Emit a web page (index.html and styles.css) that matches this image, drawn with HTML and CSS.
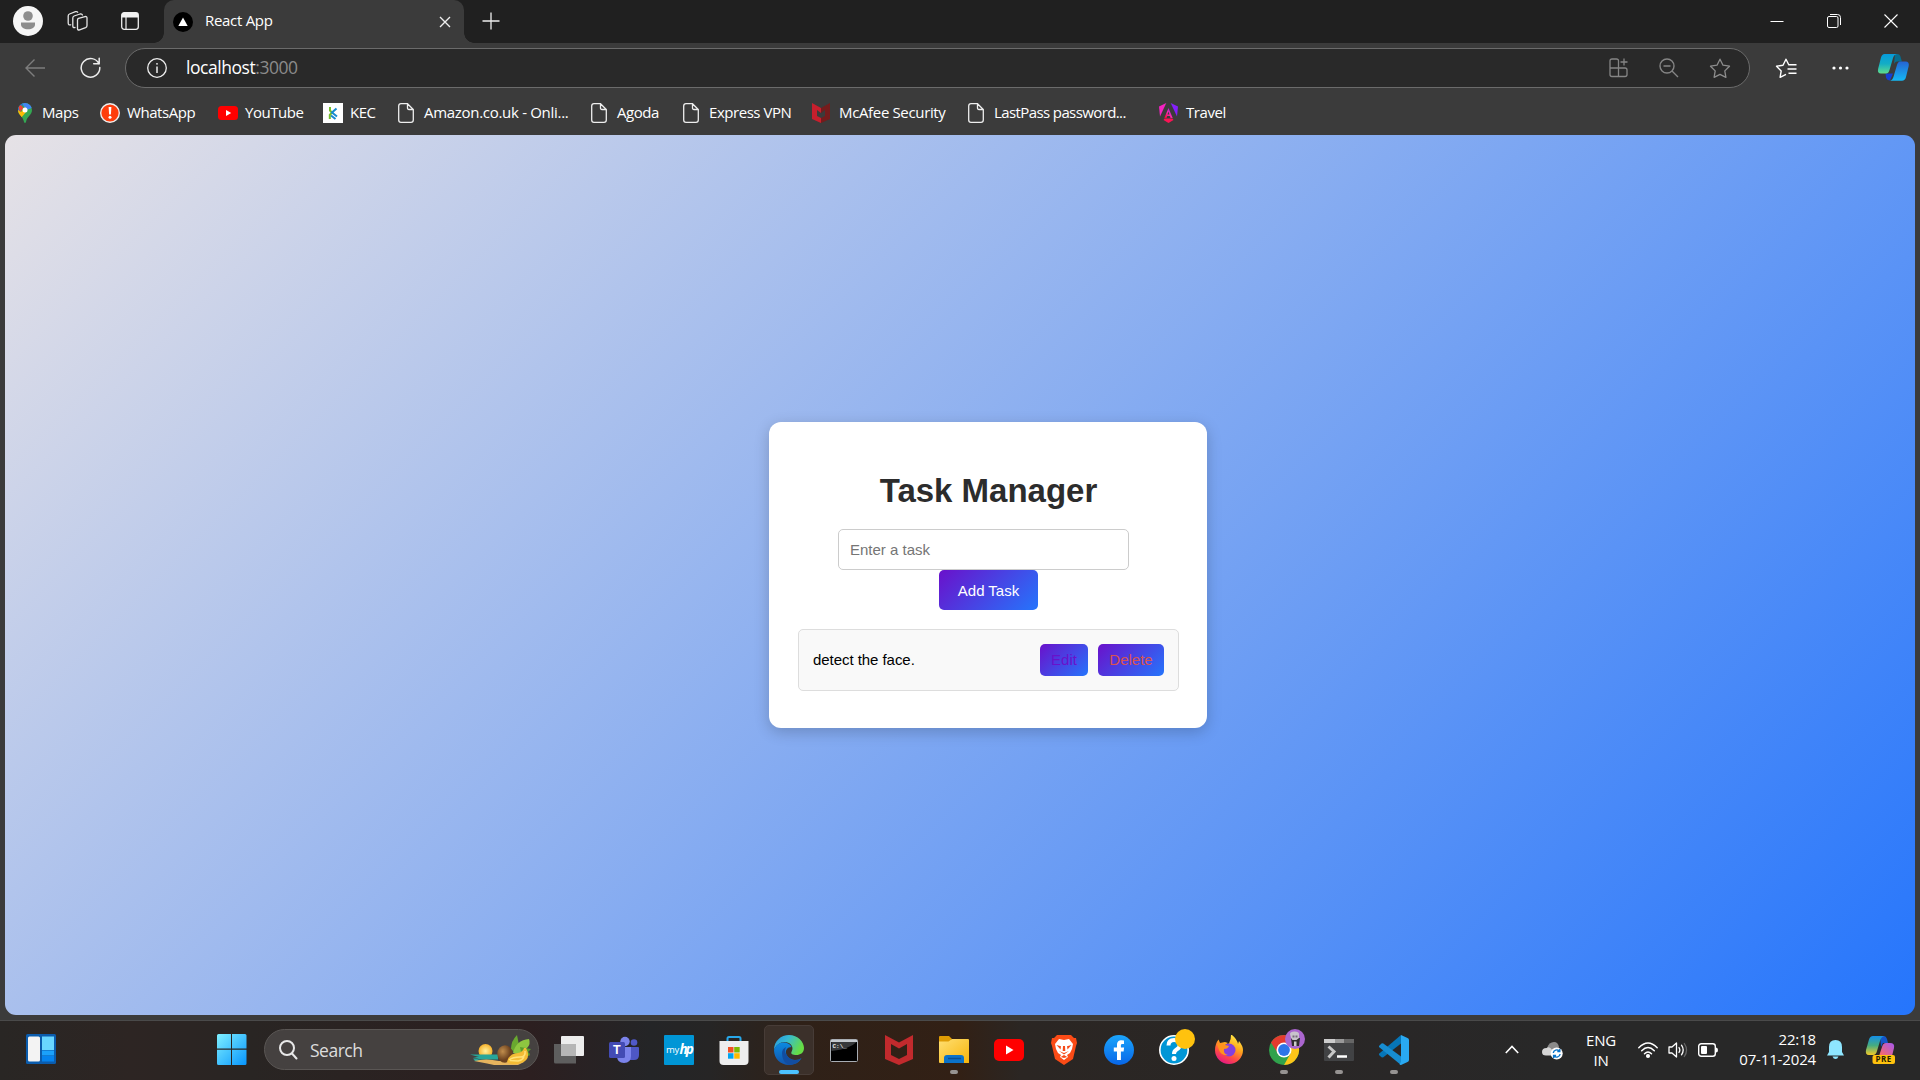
FILE: index.html
```
<!DOCTYPE html>
<html lang="en">
<head>
<meta charset="utf-8">
<title>React App</title>
<link rel="stylesheet" href="styles.css">
</head>
<body>
<div class="desktop">
  <header class="tabstrip">
    <div class="profile"><svg width="30" height="30" viewBox="0 0 30 30"><circle cx="15" cy="15" r="15" fill="#f6f6f6"/><circle cx="15" cy="10" r="4.800" fill="#8d8d8d"/><path d="M8 16.500h14v1.800c0 3.200-3 5-7 5s-7-1.800-7-5z" fill="#8d8d8d"/></svg></div>
    <div class="workspaces"><svg width="22" height="22" viewBox="0 0 22 22" fill="none" stroke="#e4e4e4" stroke-width="1.300" stroke-linejoin="round" stroke-linecap="round"><path d="M11.500 8.300 18 6.600q2-.5 2 1.400v7.500q0 1.500-1.400 2.100l-6 2.200q-2.100.7-2.100-1.300V10q0-1.300 1-1.700z"/><path d="M8 17.500q-2.200.5-2.200-1.500V8q0-1.500 1.300-2l6-2q1.800-.5 2.300 1"/><path d="M3.700 14.800Q1.200 15.500 1.200 13V6q0-1.500 1.300-2l6-2.300q1.600-.5 2.200.6"/></svg></div>
    <div class="vertical-tabs"><svg width="18" height="18" viewBox="0 0 18 18"><rect x=".7" y=".7" width="16.600" height="16.600" rx="2.500" fill="none" stroke="#eee" stroke-width="1.300"/><path d="M.7 5.500V3Q.7.700 3 .7h12q2.300 0 2.300 2.300v2.500z" fill="#f2f2f2"/><path d="M5 5v12" stroke="#eee" stroke-width="1.200"/></svg></div>
    <div class="tab">
      <svg width="20" height="20" viewBox="0 0 20 20"><circle cx="10" cy="10" r="10"/><path d="M10 5.500 14.700 14H5.300z" fill="#fff"/></svg>
      <span class="tab-title">React App</span>
      <svg class="tab-close" width="12" height="12" viewBox="0 0 12 12" stroke="#eee" stroke-width="1.400"><path d="m1 1 10 10M11 1 1 11"/></svg>
    </div>
    <div class="new-tab"><svg width="18" height="18" viewBox="0 0 18 18" stroke="#eee" stroke-width="1.300"><path d="M9 .5v17M.5 9h17"/></svg></div>
    <div class="window-controls">
      <svg width="14" height="14" viewBox="0 0 14 14" stroke="#fff"><path d="M.5 7.500h13"/></svg>
      <svg width="14" height="14" viewBox="0 0 14 14" fill="none" stroke="#fff"><rect x=".5" y="2.500" width="10.500" height="11" rx="1.500"/><path d="M3 .5h7.500q3 0 3 3V11"/></svg>
      <svg width="14" height="14" viewBox="0 0 14 14" stroke="#fff" stroke-width="1.100"><path d="m.5.5 13 13M13.500.5l-13 13"/></svg>
    </div>
  </header>

  <nav class="toolbar">
    <svg class="back" width="20" height="18" viewBox="0 0 20 18" fill="none" stroke="#7d7d7d" stroke-width="1.400"><path d="M20 9H1M9.500.5 1 9l8.500 8.500"/></svg>
    <svg class="reload" width="21" height="21" viewBox="0 0 21 21" fill="none" stroke="#ededed" stroke-width="1.500" stroke-linecap="round" stroke-linejoin="round"><path d="M19 7a9.300 9.300 0 1 0 .8 3.500M19.200 1.200v5.600h-5.500"/></svg>
    <div class="address">
      <svg width="20" height="20" viewBox="0 0 20 20" fill="none" stroke="#eee" stroke-width="1.300"><circle cx="10" cy="10" r="9.300"/><path d="M10 8.500V15" stroke-width="1.500"/><circle cx="10" cy="5.800" r=".9" fill="#eee" stroke="none"/></svg>
      <span class="url">localhost<span class="port">:3000</span></span>
      <div class="address-actions">
        <svg width="20" height="20" viewBox="0 0 20 20" fill="none" stroke="#858585" stroke-width="1.300"><path d="M9.500 10V3q0-2-2-2H3Q1 1 1 3v13.500q0 2 2 2h13q2 0 2-2V12q0-2-2-2H1M9.500 10v8.500M15 .5v7M11.500 4h7"/></svg>
        <svg width="20" height="20" viewBox="0 0 20 20" fill="none" stroke="#858585" stroke-width="1.400"><circle cx="8" cy="8" r="7"/><path d="M4.500 8h7M13 13l6 6"/></svg>
        <svg width="22" height="20" viewBox="0 0 22 20" fill="none" stroke="#8d8d8d" stroke-width="1.300" stroke-linejoin="round"><path d="m11 1.200 3 6 6.500 1-4.700 4.700 1.100 6.400-5.900-3-5.900 3 1.100-6.400L1.500 8.200l6.500-1z"/></svg>
      </div>
    </div>
    <svg class="favorites" width="22" height="20" viewBox="0 0 22 20" fill="none" stroke="#fff" stroke-width="1.400" stroke-linejoin="round"><path d="M14 7.200 11 1.200 8 7.200l-6.500 1 4.700 4.700-1.100 6.400 5.900-3M13.500 6.800H21.500M12.500 11H21.500M13.500 15.300H21.500"/></svg>
    <svg class="menu" width="18" height="4" viewBox="0 0 18 4" fill="#fff"><circle cx="2" cy="2" r="1.600"/><circle cx="8.500" cy="2" r="1.600"/><circle cx="15" cy="2" r="1.600"/></svg>
    <svg class="copilot" width="31" height="27" viewBox="0 0 31 27">
      <defs>
        <linearGradient id="cpA" x1="0" y1="0" x2="0" y2="1"><stop offset="0" stop-color="#069bdc"/><stop offset=".5" stop-color="#13adc5"/><stop offset="1" stop-color="#5fdc8c"/></linearGradient>
        <linearGradient id="cpB" x1="0" y1="0" x2="0" y2="1"><stop offset="0" stop-color="#2563d3"/><stop offset="1" stop-color="#14b9f4"/></linearGradient>
      </defs>
      <path d="M17 0h2.500q2 0 2.800 2l1.600 5.500h-5Q17 7.500 16 10z" fill="#086d8f"/>
      <path d="M7.500 19.500H15l-3 7q-3 0-4-3z" fill="#153fd2"/>
      <path d="M6.500 0H19q-3 .5-4 4l-3.500 12q-1 3.500-3.500 3.500H3q-4 0-2.800-5L3 3.500Q4 0 6.500 0z" fill="url(#cpA)"/>
      <path d="M22 7.500h5.500q4 0 3.200 4.500L28 23q-1 3.800-4 3.800H12q2.500-.5 3.500-4L19 11q1-3.500 3-3.500z" fill="url(#cpB)"/>
    </svg>
  </nav>

  <nav class="bookmarks">
    <div class="bookmark maps"><svg width="14" height="20" viewBox="0 0 14 20"><clipPath id="pin"><path d="M7 0a7 7 0 0 1 7 7c0 5-5 6-6 12q-1 2-2 0C5 13 0 12 0 7a7 7 0 0 1 7-7z"/></clipPath><g clip-path="url(#pin)"><path d="M0 0h14v20H0z" fill="#34a853"/><path d="M4 0h10v5L8 7z" fill="#4285f4"/><path d="M0 6l3 3 5-5v5l-5 6-3-2z" fill="#fbbc04"/><path d="M0 0h5l-1 4-2 4-2-1z" fill="#1a73e8"/><path d="M0 3.500 3 2l2.500 3L2 9z" fill="#ea4335"/></g><circle cx="7" cy="7" r="2.500" fill="#fff"/></svg><span>Maps</span></div>
    <div class="bookmark whatsapp"><svg width="20" height="20" viewBox="0 0 20 20"><circle cx="10" cy="10" r="9.300" fill="#ff3d0c" stroke="#eee" stroke-width="1.400"/><path d="M8.600 4h2.800l-.5 7.500H9.100z" fill="#fff"/><circle cx="10" cy="14.300" r="1.500" fill="#fff"/></svg><span>WhatsApp</span></div>
    <div class="bookmark youtube"><svg width="20" height="14" viewBox="0 0 20 14"><rect width="20" height="14" rx="3.500" fill="#f00"/><path d="m8 4 5.200 3L8 10z" fill="#fff"/></svg><span>YouTube</span></div>
    <div class="bookmark kec"><svg width="20" height="20" viewBox="0 0 20 20" fill="none" stroke-width="2"><path d="M0 0h20v20H0z" fill="#fff"/><path d="M7 4v3.500l2 2L6.800 12v4" stroke="#75bd2b"/><path d="m13.500 5.500-4.500 4 5 4M8 12.500l4.500 3.500" stroke="#168ad0"/></svg><span>KEC</span></div>
    <div class="bookmark amazon"><svg width="16" height="20" viewBox="0 0 16 20" fill="none" stroke="#eee" stroke-width="1.300"><path d="M9.500.7H3Q.7.700.7 3v14q0 2.300 2.300 2.300h10q2.300 0 2.300-2.300V6.500zM9.500.7V5q0 1.500 1.500 1.500h4.300"/></svg><span>Amazon.co.uk - Onli...</span></div>
    <div class="bookmark agoda"><svg width="16" height="20" viewBox="0 0 16 20" fill="none" stroke="#eee" stroke-width="1.300"><path d="M9.500.7H3Q.7.700.7 3v14q0 2.300 2.300 2.300h10q2.300 0 2.300-2.300V6.500zM9.500.7V5q0 1.500 1.500 1.500h4.300"/></svg><span>Agoda</span></div>
    <div class="bookmark express"><svg width="16" height="20" viewBox="0 0 16 20" fill="none" stroke="#eee" stroke-width="1.300"><path d="M9.500.7H3Q.7.700.7 3v14q0 2.300 2.300 2.300h10q2.300 0 2.300-2.300V6.500zM9.500.7V5q0 1.500 1.500 1.500h4.300"/></svg><span>Express VPN</span></div>
    <div class="bookmark mcafee"><svg width="18" height="20" viewBox="0 0 18 20" fill="none"><path d="M0 0l9 5v5L5 7v6l4 2v5l-9-4z" fill="#c71f2d"/><path d="m18 0-9 5v5l4-3v6l-4 2v5l9-4z" fill="#741c1c"/></svg><span>McAfee Security</span></div>
    <div class="bookmark lastpass"><svg width="16" height="20" viewBox="0 0 16 20" fill="none" stroke="#eee" stroke-width="1.300"><path d="M9.500.7H3Q.7.700.7 3v14q0 2.300 2.300 2.300h10q2.300 0 2.300-2.300V6.500zM9.500.7V5q0 1.500 1.500 1.500h4.300"/></svg><span>LastPass password...</span></div>
    <div class="bookmark travel"><svg width="19" height="20" viewBox="0 0 19 20"><defs><linearGradient id="ng" x1="0" y1="1" x2="1" y2="0"><stop offset="0" stop-color="#f02"/><stop offset=".5" stop-color="#f22bb3"/><stop offset="1" stop-color="#7b1cff"/></linearGradient></defs><path d="M0 3.500 7.300 0 1 13.500z" fill="#f423c2"/><path d="M19 3.500 11.700 0 18 13.500z" fill="#8420fb"/><path d="m9.500 5 4.200 10h-2.200l-.7-2H8.200l-.7 2H5.300zm0 3.500L8.500 11.500h2z" fill="url(#ng)" fill-rule="evenodd"/><path d="M5.500 15.500h8l1 1.500-5 3-5-3z" fill="#fa1455"/></svg><span>Travel</span></div>
  </nav>

  <main class="page">
    <section class="card">
      <h1>Task Manager</h1>
      <input class="task-input" type="text" placeholder="Enter a task">
      <button class="add">Add Task</button>
      <div class="task">
        <span class="task-name">detect the face.</span>
        <button class="small edit">Edit</button>
        <button class="small delete">Delete</button>
      </div>
    </section>
  </main>

  <footer class="taskbar">
    <div class="widgets"><svg width="30" height="30" viewBox="0 0 30 30"><rect width="30" height="30" rx="1.500" fill="#0b5cad"/><rect x="2" y="2.500" width="12" height="25" rx="1.500" fill="#f3f3f3"/><path d="M16 2.500h12V16H16z" fill="#69d6ff"/><path d="M16 16.500h12v5H16z" fill="#1ba1fb"/><path d="M16 22h12v5.500H16z" fill="#0583ee"/></svg></div>
    <div class="start"><svg width="30" height="31" viewBox="0 0 30 31"><defs><linearGradient id="win" x1="0" y1="0" x2="1" y2="1"><stop offset="0" stop-color="#7ff0ff"/><stop offset="1" stop-color="#0795fd"/></linearGradient></defs><path d="M1.500 0H14v14.500H0v-13Q0 0 1.500 0zM15 0h13q1.500 0 1.500 1.500v13H15zM0 15.700h14V31H1.500Q0 31 0 29.500zM15 15.700h14.500v13.800q0 1.500-1.500 1.500H15z" fill="url(#win)"/></svg></div>
    <div class="search">
      <svg width="19" height="20" viewBox="0 0 19 20" fill="none" stroke="#e8e8e8" stroke-width="2" stroke-linecap="round"><circle cx="8" cy="8" r="7"/><path d="m13 13.500 4.500 5"/></svg>
      <span>Search</span>
      <svg class="fruit" width="61" height="32" viewBox="0 0 61 32">
        <defs><radialGradient id="sun"><stop offset="0" stop-color="#fff3a0"/><stop offset="1" stop-color="#f6b12c"/></radialGradient><radialGradient id="coco" cx=".35" cy=".35"><stop offset="0" stop-color="#c08d4c"/><stop offset="1" stop-color="#6d421f"/></radialGradient></defs>
        <circle cx="15.500" cy="17" r="7" fill="url(#sun)"/>
        <path d="M0 20.500h28v5H7l5 1.500H5l-2-2.500h6L3 23h6z" fill="#27a69a"/>
        <path d="M4 27q12-3 25 0l25 1-6 3H24l-7-1.500z" fill="#e6b45e"/>
        <path d="M47 1q1 5 2 10l-3 9-5-5q0-8 6-14z" fill="#69a82f"/>
        <path d="M59 5q2 5-2 9l-9 6-5-1q3-13 16-14z" fill="#8ec640"/><path d="m50 13 11 2-3 3q3 2 1 4l-8-4z" fill="#5a9d2c"/>
        <ellipse cx="35" cy="20" rx="7.700" ry="8.700" fill="url(#coco)"/>
        <path d="M54 14h2q6 11-5 15-9 3-14-1l1-3q3-6 10-6 5-1 6-5z" fill="#f4bc35"/><path d="M55 17q1 6-5 6-7 0-11 3M54 21q0 5-6 6l-8-.5" fill="none" stroke="#ffe277" stroke-width="1.500"/>
      </svg>
    </div>
    <div class="apps">
      <div class="app"><svg width="30" height="30" viewBox="0 0 30 30"><path d="M0 9h22v19.500H1.500Q0 28.500 0 27z" fill="#5e5e5e"/><rect x="7" y="1" width="23" height="20" rx="1" fill="#ededed"/><path d="M7 9h15v12H7z" fill="#b6b6b6"/></svg></div>
      <div class="app"><svg width="30" height="30" viewBox="0 0 30 30"><circle cx="25" cy="7.500" r="3.300" fill="#5059c9"/><path d="M20 12h9q1 0 1 1v7q0 5-5 5h-5z" fill="#4e57c5"/><circle cx="16" cy="6.500" r="4.700" fill="#7b83eb"/><path d="M8 12h14v9q0 7-7 7t-7-7z" fill="#7b83eb"/><rect y="7" width="16" height="16" rx="1.500" fill="#434bb4"/><text class="glyph-teams" x="4" y="19.300">T</text></svg></div>
      <div class="app"><svg width="30" height="30" viewBox="0 0 30 30"><rect width="30" height="30" rx="1" fill="#0096d6"/><text class="glyph-my" x="2" y="17.500">my</text><text class="glyph-hp" x="15.500" y="18.500">hp</text></svg></div>
      <div class="app"><svg width="30" height="30" viewBox="0 0 30 30"><path d="M8.500 7V3.500Q8.500 2 10 2h10q1.500 0 1.500 1.500V7" fill="none" stroke="#28a8ea" stroke-width="2"/><path d="M.5 6h29v20q0 4-4 4h-21q-4 0-4-4z" fill="#eee"/><path d="M9 12h5.500v5.500H9z" fill="#f25022"/><path d="M15.200 12h5.500v5.500h-5.500z" fill="#7fba00"/><path d="M9 18.200h5.500v5.500H9z" fill="#00a4ef"/><path d="M15.200 18.200h5.500v5.500h-5.500z" fill="#ffb900"/></svg></div>
      <div class="app active"><svg width="30" height="30" viewBox="0 0 30 30"><defs><linearGradient id="eg" x1="0" y1="0" x2="1" y2=".4"><stop offset="0" stop-color="#2494df"/><stop offset=".45" stop-color="#36b9d4"/><stop offset="1" stop-color="#66dd45"/></linearGradient><linearGradient id="eb" x1="0" y1="0" x2="0" y2="1"><stop offset="0" stop-color="#0b8ae2"/><stop offset="1" stop-color="#1254ab"/></linearGradient></defs><path d="M0 15C0 6 7 0 15 0c9 0 15 7 15 13 0 5-4 7-7.500 7-4 0-6-1.200-5-3C21 11 15 7 11 7 6 7 2 10 0 15z" fill="url(#eg)"/><path d="M0 15c2-5 5-7.500 10-7.500 4 0 7 2.500 7.500 4.500-4 0-6 3-5.500 6 .6 4 5 7 9 7 3 0 5-1 6.500-2C25 28 20 30 15 30 6.500 30 0 23.500 0 15z" fill="url(#eb)"/><path d="M8 18q0-4 4-6-2 4 0 7 4 7 11 6 2-.2 4-2-4 7-12 7-7-3-7-12z" fill="#124da0"/></svg></div>
      <div class="app"><svg width="28" height="23" viewBox="0 0 28 23"><rect x=".5" y=".5" width="27" height="22" rx="1" fill="#000" stroke="#a8adb3"/><path d="M1 1h26v2H1z" fill="#c4c9ce"/><path d="M1.500 3h25Q20 10 1.500 12z" fill="#37393b"/><text class="glyph-cmd" x="2.500" y="9">C:\_</text></svg></div>
      <div class="app"><svg width="28" height="30" viewBox="0 0 28 30"><path d="m0 0 14 7.500L28 0v24l-14 6-14-6zm6 9v11l8 4 8-4V9l-8 4.500z" fill="#c22a2d" fill-rule="evenodd"/></svg></div>
      <div class="app running"><svg width="30" height="28" viewBox="0 0 30 28"><defs><linearGradient id="fold" x1="0" y1="0" x2="1" y2="1"><stop offset="0" stop-color="#ffdf72"/><stop offset="1" stop-color="#f7b50b"/></linearGradient></defs><path d="M1 0h9l3 3-3 5H0V1q0-1 1-1z" fill="#df9c04"/><path d="M0 5.500h9.500L13 3h16q1 0 1 1v23H1q-1 0-1-1z" fill="url(#fold)"/><path d="M5 27v-5q0-3 3-3h14q3 0 3 3v5z" fill="#0b72c9"/><path d="M9 22.500h13" stroke="#084f94" stroke-width="1.500"/></svg></div>
      <div class="app"><svg width="30" height="22" viewBox="0 0 30 22"><rect width="30" height="22" rx="5" fill="#f00"/><path d="m12 6.500 7.500 4.500-7.500 4.500z" fill="#fff"/></svg></div>
      <div class="app"><svg width="26" height="30" viewBox="0 0 26 30"><path d="M6 0h14l3 3h2l1 5-1 3-3 13-9 6-9-6L1 11 0 8l1-5h2z" fill="#fb4b16"/><path d="m13 5 5-1 4 5-1 5-2 4-3 2 1 2-4 3-4-3 1-2-3-2-2-4-1-5 4-5z" fill="#fff"/><path d="m5.500 10 4.500 1.200-.5 3.200zM20.500 10 16 11.200l.5 3.200zM12 11h2l.3 5h-2.600zM8 16l5 2 5-2-5 3.500zM9.700 22l3.300-2 3.300 2-3.300 1z" fill="#f74a18"/></svg></div>
      <div class="app"><svg width="30" height="30" viewBox="0 0 30 30"><defs><linearGradient id="fb" x1="0" y1="0" x2="0" y2="1"><stop offset="0" stop-color="#1ba5fb"/><stop offset="1" stop-color="#0866e8"/></linearGradient></defs><circle cx="15" cy="15" r="15" fill="url(#fb)"/><path d="M13 25v-8.500H9.800v-4H13V10c0-3.400 2-4.800 4.500-4.800l2.500.2V9h-1.500c-1.300 0-1.600.7-1.600 1.600v1.900h3.200l-.5 4h-2.700V25z" fill="#fff"/></svg></div>
      <div class="app"><svg class="spill" width="36" height="36" viewBox="0 0 36 36"><circle cx="15" cy="21" r="14.200" fill="#0096d6" stroke="#fff" stroke-width="1.600"/><path d="M9.500 16.500Q9.500 11 15 11q5.800 0 5.800 4.700 0 3-3.200 4.800-2.600 1.500-2.600 4.500" fill="none" stroke="#fff" stroke-width="4"/><circle cx="15" cy="29.500" r="2.500" fill="#fff"/><circle cx="26" cy="10" r="10" fill="#ffc20e"/></svg></div>
      <div class="app"><svg width="30" height="30" viewBox="0 0 30 30"><defs><linearGradient id="ff" x1=".8" y1="0" x2=".3" y2="1"><stop offset="0" stop-color="#fff04a"/><stop offset=".4" stop-color="#ffa71c"/><stop offset=".7" stop-color="#ff4d43"/><stop offset="1" stop-color="#e31587"/></linearGradient></defs><path d="M18 0q5 4 6 9l1-3q4 5 4 9a14 14 0 1 1-28 0Q1 9 4.500 4.500L6 8l5-1 3 1-4 3q7-1 7-11z" fill="url(#ff)"/><circle cx="15" cy="15" r="6.500" fill="#8340df"/><path d="M3 9q5-2 8 1l4 1q-1 3-5 3-1 5 4 6-7 1-9-5z" fill="#ff921e"/></svg></div>
      <div class="app running"><svg class="spill" width="36" height="36" viewBox="0 0 36 36"><circle cx="15" cy="21" r="15" fill="#30a24c"/><path d="M2 13.500A15 15 0 0 1 28 13.500L15 14l-6 10.500z" fill="#e33b2e"/><path d="M28 13.500A15 15 0 0 1 15 36l6.500-11.500L15 14z" fill="#fcc519"/><circle cx="15" cy="21" r="7.500" fill="#fff"/><circle cx="15" cy="21" r="5.900" fill="#2d75e8"/><circle cx="26" cy="10" r="10" fill="#ab66cf"/><path d="M22 9h9l-1 8h-7z" fill="#302d31"/><path d="M21 5q0-2.500 4.500-2.500T30 5v4l-2.500 2h-4L22 9z" fill="#c9c3cc"/><path d="M23.500 6.500h2v2h-2zM26.500 6.500h2v2h-2z" fill="#776b7b"/><path d="M25 12.500h2.500v4.500H25z" fill="#ccc"/></svg></div>
      <div class="app running"><svg width="30" height="22" viewBox="0 0 30 22"><rect width="30" height="22" rx="1" fill="#414244"/><path d="M0 0h11v4H0z" fill="#ccc"/><path d="M11 0h9v4h-9z" fill="#999"/><path d="M20 0h10v4H20z" fill="#666"/><path d="m4.500 7.500 5.500 5-5.500 6" fill="none" stroke="#c7c7c7" stroke-width="3"/><path d="M13 17.500h10" stroke="#fff" stroke-width="2.500"/></svg></div>
      <div class="app running"><svg width="30" height="30" viewBox="0 0 30 30"><path d="M22 0v8.500L4 22.500l-1.500-.3L0 20v-1.300z" fill="#0675b7"/><path d="m0 11 2.500-2.500L4 8.200 22 21.500V30L0 12z" fill="#178dd1"/><path d="M22 0l6.500 3Q30 3.700 30 5v20q0 1.300-1.500 2L22 30q-1 0-1.500-.7L22 27z" fill="#29a9f2"/></svg></div>
    </div>
    <div class="tray">
      <svg class="chevron" width="14" height="9" viewBox="0 0 14 9" fill="none" stroke="#fff" stroke-width="1.600"><path d="m.8 8 6.200-6.500L13.200 8"/></svg>
      <svg class="cloud" width="21" height="18" viewBox="0 0 21 18"><path d="M5 6q2-6 7-6 4 0 5 5l-2 8H5z" fill="#8b8b8b"/><path d="M4 13.500Q0 13.500 0 10q0-4 4.500-4Q8 4 10 8l7 .5v5z" fill="#d5d5d5"/><circle cx="14.700" cy="11.500" r="6" fill="#fff"/><path d="M11.300 11a3.500 3.500 0 0 1 6-2M17.800 7v2.500h-2.500M18.100 12a3.500 3.500 0 0 1-6 2M11.600 16v-2.500h2.500" fill="none" stroke="#0874c9" stroke-width="1.400"/></svg>
      <div class="lang"><span>ENG</span><span>IN</span></div>
      <svg class="wifi" width="20" height="16" viewBox="0 0 20 16" fill="none" stroke="#fff" stroke-width="1.500" stroke-linecap="round"><path d="M.8 5.700q9.200-9.500 18.400 0M3.700 8.800q6.300-6.500 12.600 0M6.500 11.800q3.500-3.500 7 0"/><circle cx="10" cy="14" r="1.300" fill="#fff"/></svg>
      <svg class="sound" width="20" height="16" viewBox="0 0 20 16" fill="none" stroke="#fff" stroke-width="1.300" stroke-linejoin="round" stroke-linecap="round"><path d="M1 5h3l4.500-4v14L4 11H1zM11 5.500q1.700 2.500 0 5M13.500 3.200q3.400 4.800 0 9.600"/><path d="M16.300 1.500q4.500 6.500 0 13" stroke="#666"/></svg>
      <svg class="battery" width="20" height="14" viewBox="0 0 20 14"><rect x=".7" y=".7" width="16.600" height="12.600" rx="2.500" fill="none" stroke="#fff" stroke-width="1.400"/><rect x="3" y="3" width="6" height="8" rx="1" fill="#fff"/><path d="M18 4.500q2 0 2 2.500t-2 2.500z" fill="#fff"/></svg>
      <div class="clock"><span>22:18</span><span>07-11-2024</span></div>
      <svg class="bell" width="17" height="19" viewBox="0 0 17 19" fill="#8ee6ff"><path d="M8.500 0Q15 0 15 7v5l2 3.500H0L2 12V7Q2 0 8.500 0zM5.500 16.500h6q-1 2.500-3 2.500t-3-2.500z"/></svg>
      <svg class="pre" width="29" height="28" viewBox="0 0 29 28"><defs><linearGradient id="pa" x1="0" y1="0" x2="0" y2="1"><stop offset="0" stop-color="#1490e8"/><stop offset=".5" stop-color="#46ac80"/><stop offset="1" stop-color="#f3cb28"/></linearGradient><linearGradient id="pb" x1="1" y1="0" x2="0" y2="1"><stop offset="0" stop-color="#a558f1"/><stop offset="1" stop-color="#ff6b5c"/></linearGradient></defs><path d="M14 0h4q2 0 3 3l1 4h-5l-2 4z" fill="#1456c9"/><path d="M7 0h11q-3 1-4 5l-3 10q-1 4-4 4H3q-4 0-3-5L3 3.500Q4 0 7 0z" fill="url(#pa)"/><path d="M20 7h4q5 0 4 5l-2 8H13l3-9q1-4 4-4z" fill="url(#pb)"/><rect x="6.500" y="19" width="22.500" height="9" rx="2" fill="#ffc20e"/><text class="glyph-pre" x="9.500" y="26.400">PRE</text></svg>
    </div>
  </footer>
</div>
</body>
</html>
```
FILE: styles.css
```
* { box-sizing: border-box; }
body { margin: 0; font-family: "Open Sans", "Noto Sans", sans-serif; color: #fff; overflow: hidden; }
svg { display: block; flex: none; overflow: visible; }
.desktop { width: 1920px; height: 1080px; display: flex; flex-direction: column; background: #3b3b3b; }

.tabstrip { height: 43px; flex: none; display: flex; align-items: center; background: #202020; padding: 0 0 1px 13px; }
.workspaces { margin-left: 24px; }
.vertical-tabs { margin-left: 32px; }
.tab { position: relative; width: 300px; height: 43px; margin: 0 0 -1px 25px; padding: 0 13px 0 9px; display: flex; align-items: center; background: #3b3b3b; border-radius: 10px 10px 0 0; }
.tab::before, .tab::after { content: ""; position: absolute; bottom: 0; width: 10px; height: 10px; }
.tab::before { left: -10px; background: radial-gradient(circle at 0 0, #202020 9.5px, #3b3b3b 10px); }
.tab::after { right: -10px; background: radial-gradient(circle at 100% 0, #202020 9.5px, #3b3b3b 10px); }
.tab-title { margin-left: 12px; font-size: 15px; letter-spacing: -.3px; line-height: 40px; padding-bottom: 4px; }
.tab-close { margin-left: auto; }
.new-tab { margin-left: 18px; }
.window-controls { margin-left: auto; display: flex; gap: 43px; padding-right: 22px; }

.toolbar { height: 49px; flex: none; display: flex; align-items: center; padding-left: 25px; }
.reload { margin-left: 35px; }
.address { width: 1625px; height: 40px; margin-left: 24px; display: flex; align-items: center; padding: 0 18px 0 21px; border: 1px solid #6b6b6b; border-radius: 20px; background: #292929; }
.url { margin-left: 19px; font-size: 17.5px; letter-spacing: -.45px; line-height: 24px; padding-bottom: 1px; }
.port { color: #8b8b8b; }
.address-actions { margin-left: auto; display: flex; gap: 30px; }
.favorites { margin-left: 25px; }
.menu { margin-left: 35px; }
.copilot { margin-left: 28px; }

.bookmarks { height: 43px; flex: none; display: grid; grid-template-columns: 82px 118px 105px 75px 193px 92px 129px 156px 191px 90px; align-items: center; padding: 0 0 1px 18px; }
.bookmark { display: flex; align-items: center; gap: 7px; font-size: 15px; line-height: 20px; letter-spacing: -.45px; white-space: nowrap; }
.bookmark span { margin-bottom: 2px; }
.maps { gap: 10px; }
.whatsapp { gap: 7px; }
.amazon, .agoda, .express, .lastpass { gap: 10px; }
.amazon { letter-spacing: -.3px; }
.lastpass { letter-spacing: -.6px; }
.mcafee { gap: 9px; letter-spacing: -.35px; }
.travel { gap: 8px; }

.page { height: 880px; flex: none; margin: 0 5px; padding-left: 56px; display: flex; align-items: center; justify-content: center; border-radius: 11px; background: linear-gradient(135deg, #e6e2e6, #2575fc); font-family: "Liberation Sans", sans-serif; }
.card { width: 438px; height: 306px; padding: 49px 28px 0 29px; display: flex; flex-direction: column; align-items: center; background: #fff; border-radius: 12px; box-shadow: 0 4px 15px rgba(0, 0, 0, .2); }
h1 { margin: 0; height: 58px; line-height: 40px; font-size: 33px; color: #2c2c2c; }
.task-input { width: 291px; height: 41px; margin: 0 10px 0 0; padding: 0 11px; border: 1px solid #ccc; border-radius: 5px; font: 15px "Liberation Sans", sans-serif; }
.task-input::placeholder { color: #757575; }
button { border: 0; border-radius: 5px; background: linear-gradient(135deg, #6a11cb, #2575fc); font: 15px "Liberation Sans", sans-serif; color: #fff; padding: 0; }
.add { width: 99px; height: 40px; margin-bottom: 19px; }
.task { width: 381px; height: 62px; display: flex; align-items: center; padding: 0 14px; border: 1px solid #ddd; border-radius: 5px; background: #f9f9f9; color: #000; font-size: 15px; }
.task-name { margin-bottom: 2px; letter-spacing: -.05px; }
.small { height: 32px; padding-bottom: 2px; }
.edit { width: 48px; margin-left: auto; color: #6a11cb; }
.delete { width: 66px; margin-left: 10px; color: #d9534f; }

.taskbar { height: 60px; flex: none; margin-top: 5px; display: flex; align-items: center; padding-left: 26px; border-top: 1px solid #4a4a4a; background: linear-gradient(90deg, #292624, #2d2523 130px, #292523 250px, #2c1f20 530px, #242527 650px, #262525 710px, #2f2118 800px, #322015 960px, #2b2623 1020px, #292727 1400px, #282828 1550px); }
.widgets { margin-bottom: 3px; }
.start { margin-left: 161px; margin-bottom: 2px; }
.search { width: 275px; height: 41px; margin: 0 0 2px 17px; display: flex; align-items: center; padding: 0 7px 0 14px; border: 1px solid #5a5654; border-radius: 21px; background: #454140; }
.search span { margin-left: 12px; font-size: 17.5px; letter-spacing: -.5px; color: #ddd; }
.fruit { margin-left: auto; }
.apps { margin-left: 5px; display: flex; gap: 5px; margin-bottom: 1px; }
.app { position: relative; width: 50px; height: 50px; display: flex; align-items: center; justify-content: center; border: 1px solid transparent; border-radius: 5px; }
.spill { margin: -6px -6px 0 0; }
.app.active { background: #3b302a; border-color: #473c37; }
.app.running::after, .app.active::after { content: ""; position: absolute; bottom: 0; width: 8px; height: 4px; border-radius: 2px; background: #969392; }
.app.active::after { width: 20px; background: #4cc2ff; }
.glyph-teams { font: bold 12.5px "Liberation Sans", sans-serif; fill: #fff; }
.glyph-my { font: 9.5px "Open Sans", sans-serif; letter-spacing: -.3px; fill: #fff; }
.glyph-hp { font: italic bold 13.5px "Open Sans", sans-serif; letter-spacing: -2px; fill: #fff; }
.glyph-cmd { font: bold 6px "Liberation Mono", monospace; fill: #e8e8e8; }
.glyph-pre { font: bold 8px "Open Sans", sans-serif; letter-spacing: .5px; fill: #261d00; }
.tray { margin: 0 25px 2px auto; display: flex; align-items: center; }
.cloud { margin-left: 23px; margin-top: 3px; }
.lang, .clock { display: flex; flex-direction: column; font-size: 15px; line-height: 20px; letter-spacing: -.25px; }
.lang { width: 36px; margin-left: 20px; align-items: center; }
.wifi { margin-left: 19px; }
.sound { margin-left: 10px; }
.battery { margin-left: 10px; }
.clock { width: 84px; margin: 0 0 2px 14px; align-items: flex-end; letter-spacing: -.15px; }
.bell { margin-left: 11px; }
.pre { margin-left: 22px; }
```
